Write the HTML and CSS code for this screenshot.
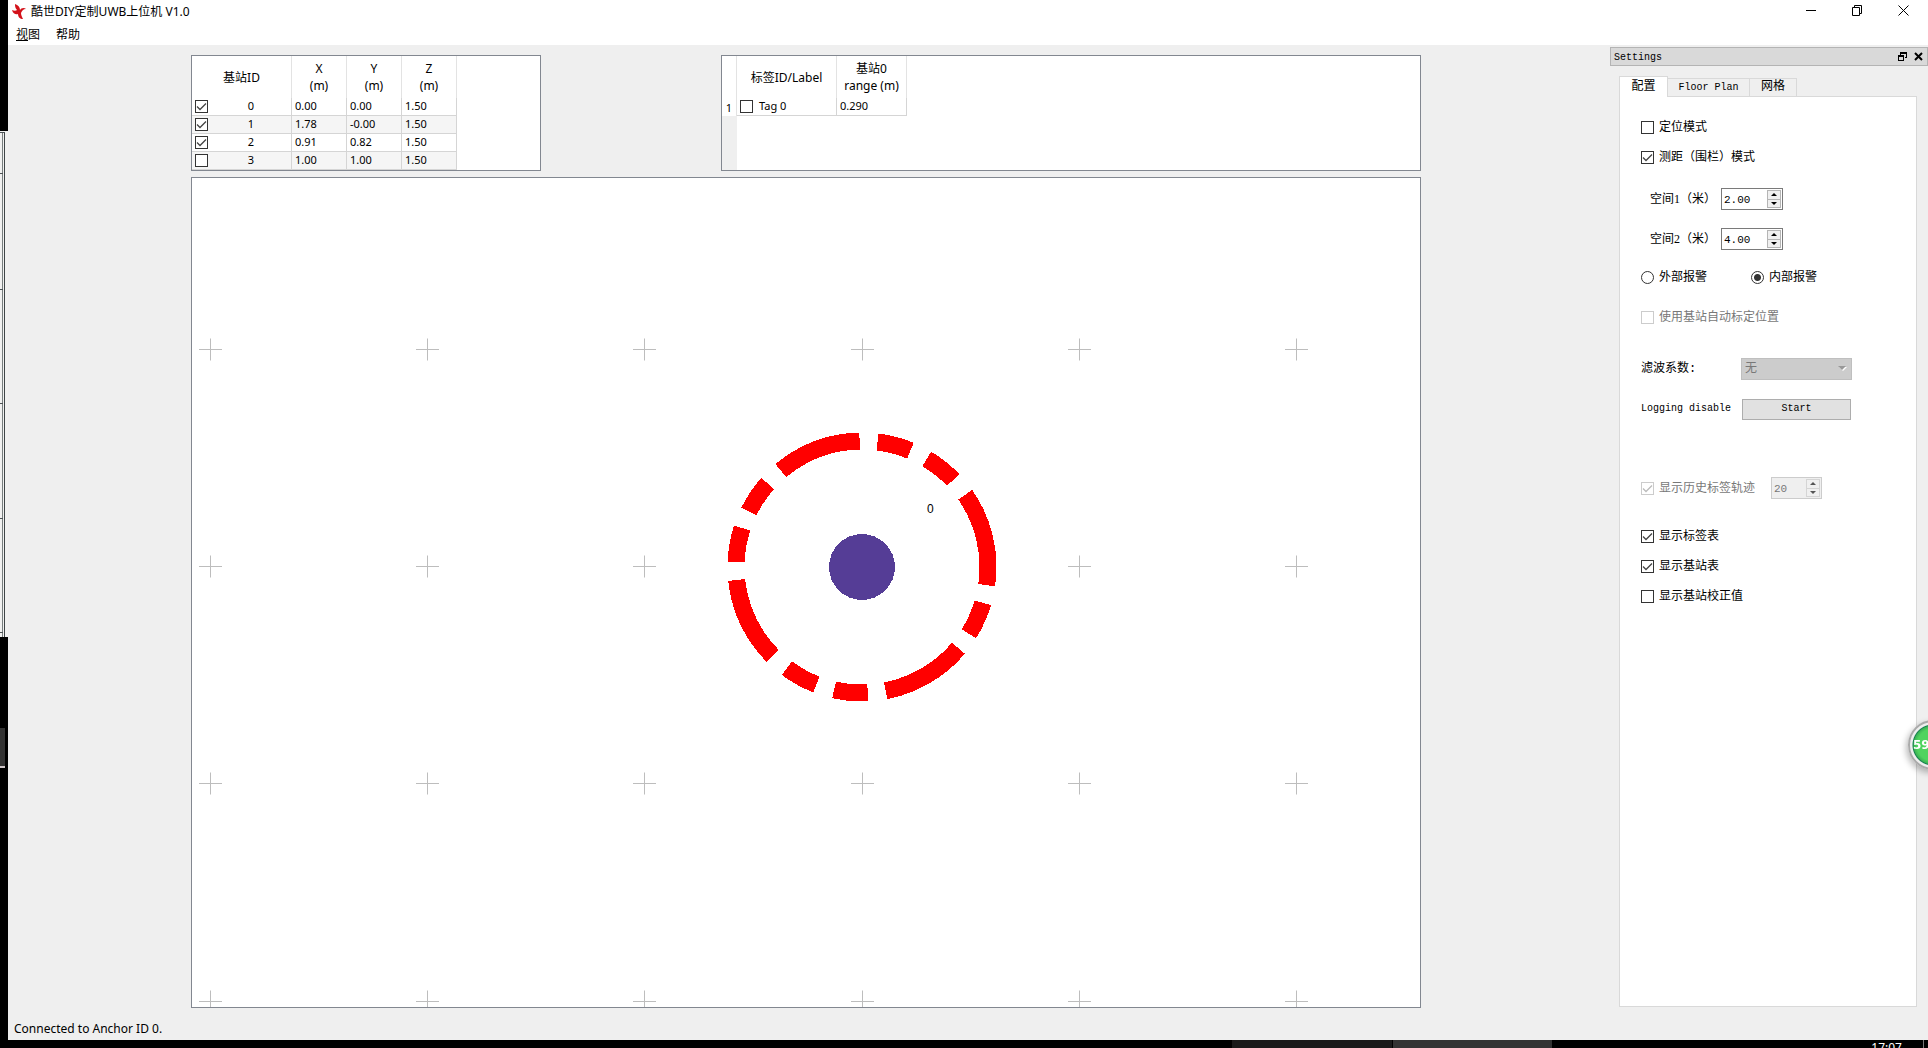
FILE: index.html
```html
<!DOCTYPE html>
<html lang="zh-CN">
<head>
<meta charset="utf-8">
<title>酷世DIY定制UWB上位机 V1.0</title>
<link rel="stylesheet" href="styles.css">
</head>
<body>
<div class="desktop">
  <aside class="behind" aria-hidden="true">
    <svg width="8" height="1040" viewBox="0 0 8 1040">
      <rect width="8" height="1040" fill="#000"/>
      <rect y="131" width="8" height="506" fill="#f1f1f0"/>
      <path d="M2.500 133V637" stroke="#777d7d"/>
      <path d="M4.500 132V637" stroke="#3f4547"/>
      <path d="M0 132.500H5M0 173.500H3M0 289.500H3M0 403.500H3M0 518.500H3M0 632.500H3" stroke="#4b5254"/>
      <rect y="728" width="5" height="38" fill="#333"/>
      <rect y="766" width="5" height="2" fill="#cfc6c8"/>
    </svg>
  </aside>
  <div class="window">
    <header class="titlebar">
      <svg class="logo" width="14" height="16" viewBox="0 0 14 16"><path fill="#d3121a" d="M3 0C6 1 8 3 8 6C9 4 12 3 14 5C11 5 10 7 9 9C9 11 10 13 11 15C8 15 6 13 6 10C4 11 1 10 0 6C2 7 4 7 5 6C3 4 3 2 3 0Z"/></svg>
      <h1 class="title">酷世DIY定制UWB上位机 V1.0</h1>
      <button class="winbtn" aria-label="最小化"><svg width="11" height="11"><path d="M0 5.500H10" stroke="#000"/></svg></button>
      <button class="winbtn" aria-label="还原"><svg width="11" height="11"><path d="M.5 2.500H7.500V10.500H.5ZM2.500 2.500V.5H9.500V8.500H7.500" fill="none" stroke="#000"/></svg></button>
      <button class="winbtn" aria-label="关闭"><svg width="11" height="11"><path d="M.5 .5L10.500 10.500M10.500 .5L.5 10.500" stroke="#000"/></svg></button>
    </header>
    <nav class="menubar">
      <button class="menu"><u>视</u>图</button>
      <button class="menu">帮助</button>
    </nav>
    <div class="body">
      <main class="main">
        <div class="tables">
          <section class="box anchors">
            <table class="grid">
              <colgroup><col class="c100"><col class="c55"><col class="c55"><col class="c55"></colgroup>
              <thead><tr><th>基站ID</th><th>X<br>(m)</th><th>Y<br>(m)</th><th>Z<br>(m)</th></tr></thead>
              <tbody>
                <tr><td><label class="cell"><input type="checkbox" checked><span class="id">0</span></label></td><td>0.00</td><td>0.00</td><td>1.50</td></tr>
                <tr><td><label class="cell"><input type="checkbox" checked><span class="id">1</span></label></td><td>1.78</td><td>-0.00</td><td>1.50</td></tr>
                <tr><td><label class="cell"><input type="checkbox" checked><span class="id">2</span></label></td><td>0.91</td><td>0.82</td><td>1.50</td></tr>
                <tr><td><label class="cell"><input type="checkbox"><span class="id">3</span></label></td><td>1.00</td><td>1.00</td><td>1.50</td></tr>
              </tbody>
            </table>
          </section>
          <section class="box tags">
            <table class="grid">
              <colgroup><col class="c15"><col class="c100"><col class="c70"></colgroup>
              <thead><tr><th></th><th>标签ID/Label</th><th>基站0<br>range (m)</th></tr></thead>
              <tbody><tr><th class="rownum" scope="row">1</th><td><label class="cell"><input type="checkbox">Tag 0</label></td><td>0.290</td></tr></tbody>
            </table>
          </section>
        </div>
        <section class="box canvas">
          <svg class="plot" viewBox="0 0 1228 830" preserveAspectRatio="xMidYMin slice">
            <defs><path id="cross" d="M-11.500 0H11.500M0 -11V11" stroke="#bdbdbd"/>
              <g id="row"><use href="#cross" x="18.500"/><use href="#cross" x="235.500"/><use href="#cross" x="452.500"/><use href="#cross" x="670.500"/><use href="#cross" x="887.500"/><use href="#cross" x="1104.500"/></g></defs>
            <use href="#row" y="171.500"/><use href="#row" y="388.500"/><use href="#row" y="605.500"/><use href="#row" y="823.500"/>
            <circle cx="670" cy="389" r="126" fill="none" stroke="#f00" stroke-width="17" pathLength="360" transform="rotate(-35 670 389)" stroke-dasharray="43.3 8.2 15.5 8.1 39.1 8.2 15.4 8.4 15.4 8.4 39.1 8.2 15.7 8.1 15.4 8.4 39 8.2 15.5 8.3 15.4 8.7" shape-rendering="crispEdges"/>
            <circle cx="670" cy="389" r="33" fill="#553d96" shape-rendering="crispEdges"/>
            <text class="tagname" x="735" y="335">0</text>
          </svg>
        </section>
      </main>
      <aside class="dock">
        <header class="dockbar">
          <h2 class="docktitle">Settings</h2>
          <button class="dockbtn" aria-label="浮动"><svg width="9" height="9"><path d="M0 3H6V9H0ZM1 5V8H5V5ZM2 0H9V6H7V5H8V2H3V3H2Z" fill="#000" fill-rule="evenodd"/></svg></button>
          <button class="dockbtn" aria-label="关闭"><svg width="9" height="9"><path d="M1 1L8 8M8 1L1 8" stroke="#000" stroke-width="2"/></svg></button>
        </header>
        <div class="tabs" role="tablist">
          <button class="tab active" role="tab" aria-selected="true">配置</button>
          <button class="tab latin" role="tab">Floor Plan</button>
          <button class="tab last" role="tab">网格</button>
        </div>
        <form class="panel">
          <div class="group">
            <label class="row"><input type="checkbox">定位模式</label>
            <label class="row"><input type="checkbox" checked>测距（围栏）模式</label>
          </div>
          <div class="group spins">
            <div class="row indent"><label class="spinlabel" for="s1">空间1（米）</label><span class="spin"><input id="s1" type="number" step="0.01" value="2.00"><span class="steps"><button type="button" class="up" aria-label="增加"></button><button type="button" class="down" aria-label="减少"></button></span></span></div>
            <div class="row indent"><label class="spinlabel" for="s2">空间2（米）</label><span class="spin"><input id="s2" type="number" step="0.01" value="4.00"><span class="steps"><button type="button" class="up" aria-label="增加"></button><button type="button" class="down" aria-label="减少"></button></span></span></div>
          </div>
          <div class="group spins near">
            <div class="row"><label class="row radio"><input type="radio" name="alarm">外部报警</label><label class="row radio"><input type="radio" name="alarm" checked>内部报警</label></div>
            <label class="row off"><input type="checkbox" disabled>使用基站自动标定位置</label>
          </div>
          <div class="group spins far">
            <div class="row"><label class="name" for="filter">滤波系数:</label><select id="filter" disabled><option>无</option></select></div>
            <div class="row"><span class="name latin">Logging disable</span><button type="button" class="start">Start</button></div>
          </div>
          <div class="group history">
            <div class="row"><label class="row off trail"><input type="checkbox" checked disabled>显示历史标签轨迹</label><span class="spin small off"><input type="number" value="20" aria-label="轨迹长度" disabled><span class="steps"><button type="button" class="up" aria-label="增加" disabled></button><button type="button" class="down" aria-label="减少" disabled></button></span></span></div>
          </div>
          <div class="group show">
            <label class="row"><input type="checkbox" checked>显示标签表</label>
            <label class="row"><input type="checkbox" checked>显示基站表</label>
            <label class="row"><input type="checkbox">显示基站校正值</label>
          </div>
        </form>
      </aside>
    </div>
    <footer class="status">Connected to Anchor ID 0.</footer>
  </div>
  <footer class="taskbar"><span class="task dim"></span><span class="task"></span><time class="clock">17:07</time><span class="peek"></span></footer>
</div>
<div class="bubble">59</div>
</body>
</html>
```
FILE: styles.css
```css
* { box-sizing: border-box; }
body {
  margin: 0;
  overflow: hidden;
  background: #000;
  color: #000;
  font: 12px/18px "Noto Sans", "Noto Sans CJK SC", sans-serif;
}
button, input, select { font: inherit; color: inherit; margin: 0; }
button { padding: 0; border: 0; background: none; }
h1, h2 { margin: 0; font-size: 12px; font-weight: 400; }

.desktop {
  display: grid;
  grid-template: minmax(0, 1fr) 8px / 8px minmax(0, 1fr);
  height: 100vh;
}
.behind { overflow: hidden; }
.window { display: flex; flex-direction: column; min-height: 0; background: #efefef; }

.titlebar { display: flex; align-items: center; height: 23px; padding: 0 2px 0 4px; background: #fff; }
.title { flex: 1; padding-left: 5px; }
.winbtn { display: grid; place-items: center; width: 46px; height: 22px; padding-bottom: 2px; }
.menubar { display: flex; gap: 16px; height: 22px; padding-left: 8px; background: #fff; }
.menu { height: 22px; padding-top: 2px; }

.body { display: flex; flex: 1; min-height: 0; }
.main { display: flex; flex: 1; flex-direction: column; gap: 6px; min-width: 0; padding: 10px 189px 0 183px; }
.tables { display: flex; justify-content: space-between; height: 116px; }
.box { border: 1px solid #828790; background: #fff; overflow: hidden; }
.anchors { width: 350px; }
.tags { width: 700px; background: linear-gradient(to right, #efefef 15px, #fff 15px); }
.canvas { flex: 1; min-height: 0; }
.plot { display: block; width: 100%; height: 100%; }
.tagname { font: 12px "Liberation Sans", sans-serif; }

.grid { table-layout: fixed; border-collapse: separate; border-spacing: 0; width: 0; }
.c15 { width: 15px; }
.c55 { width: 55px; }
.c70 { width: 70px; }
.c100 { width: 100px; }
.grid th { height: 42px; padding: 0; border-right: 1px solid #e3e3e3; background: #fff; font-weight: 400; line-height: 17px; white-space: nowrap; }
.grid td { height: 18px; padding: 0 3px; border: solid #d5d5d5; border-width: 0 1px 1px 0; background: #fff; font-size: 11px; line-height: 16px; vertical-align: top; }
.grid tr:nth-child(even) td { background: #f5f5f5; }
.grid .rownum { height: 18px; font-size: 11px; line-height: 17px; }
.cell { display: flex; gap: 6px; height: 17px; }
.cell input { margin-top: 2px; }
.id { flex: 1; text-align: center; }

input[type="checkbox"], input[type="radio"] {
  flex: none;
  appearance: none;
  width: 13px;
  height: 13px;
  border: 1px solid #333;
  background: #fff;
}
input[type="checkbox"]:checked { background: #fff url("data:image/svg+xml,%3Csvg xmlns='http://www.w3.org/2000/svg' width='11' height='11'%3E%3Cpath d='M1 5.500L4 8.500L10 2.500' fill='none' stroke='%23444' stroke-width='1.300'/%3E%3C/svg%3E") center no-repeat; }
input[type="radio"] { border-radius: 50%; }
input[type="radio"]:checked { background: radial-gradient(circle, #333 3px, #fff 4px); }
input[type="checkbox"]:disabled { border-color: #ccc; }
input[type="checkbox"]:disabled:checked { background-image: url("data:image/svg+xml,%3Csvg xmlns='http://www.w3.org/2000/svg' width='11' height='11'%3E%3Cpath d='M1 5.500L4 8.500L10 2.500' fill='none' stroke='%23bbb' stroke-width='1.300'/%3E%3C/svg%3E"); }

.dock { display: flex; flex-direction: column; width: 318px; padding-top: 2px; font-family: "Liberation Mono", "Noto Sans CJK SC", monospace; }
.dockbar { display: flex; align-items: center; gap: 7px; height: 19px; padding: 0 4px 0 3px; border: 1px solid #b4b4b4; background: #d9d9d9; }
.docktitle { flex: 1; padding-top: 2px; font-size: 10px; }
.dockbtn { display: grid; place-items: center; width: 9px; height: 9px; }
.tabs { display: flex; align-items: flex-end; height: 30px; padding: 0 9px; }
.tab { height: 18px; border: solid #d9d9d9; border-width: 1px 1px 0 0; width: 47px; line-height: 17px; }
.tab.active { z-index: 1; width: 49px; height: 21px; margin-bottom: -1px; border-left-width: 1px; background: #fff; }
.tab.latin { width: 82px; }
.latin, .start { font-size: 10px; }
.panel { flex: 1; margin: 0 11px 1px 9px; padding: 19px 21px; border: 1px solid #d9d9d9; background: #fff; }

.group { display: flex; flex-direction: column; gap: 8px; }
.spins { gap: 18px; margin-top: 20px; }
.near { margin-top: 16px; }
.far { margin-top: 30px; }
.history { margin-top: 57px; }
.show { margin-top: 26px; }
.row { display: flex; align-items: center; gap: 5px; height: 22px; white-space: nowrap; }
label.row { padding-top: 2px; }
label.row input { margin-bottom: 2px; }
.indent { padding-left: 9px; }
.spinlabel { width: 66px; font-family: "Liberation Serif", "Noto Sans CJK SC", serif; }
.radio { width: 105px; }
.off { color: #787878; }
.name { width: 95px; }
.trail { width: 125px; }

.spin { display: flex; width: 62px; height: 22px; padding: 1px; border: 1px solid #7a7a7a; background: #fff; }
.spin.small { width: 51px; border-color: #ccc; background: #efefef; }
.spin input { flex: 1; appearance: textfield; width: 0; min-width: 0; padding: 1px 1px 0; border: 0; background: none; font-size: 11px; }
.spin input::-webkit-inner-spin-button { appearance: none; }
.steps { display: flex; flex-direction: column; width: 14px; }
.up, .down { display: grid; place-items: center; flex: 1; border: 1px solid #b5b5b5; background: #f0f0f0; }
.down { border-top: 0; }
.up::before, .down::before { content: ""; border: solid transparent; border-width: 0 3px 3px; border-bottom-color: #000; }
.down::before { transform: rotate(180deg); }
.off .up, .off .down { border-color: #d5d5d5; }
.off .up::before, .off .down::before { border-bottom-color: #555; }

select {
  appearance: none;
  width: 111px;
  height: 22px;
  padding: 0 3px;
  border: 1px solid #bfbfbf;
  border-radius: 0;
  background: #ccc url("data:image/svg+xml,%3Csvg xmlns='http://www.w3.org/2000/svg' width='9' height='6'%3E%3Cpath d='M1 1H9L5 5Z' fill='%23fff'/%3E%3Cpath d='M0 0H8L4 4Z' fill='%23999'/%3E%3C/svg%3E") right 4px center no-repeat;
}
select:disabled { color: #787878; opacity: 1; }
.start { width: 109px; height: 21px; border: 1px solid #adadad; background: #e1e1e1; margin-left: 1px; }

.status { height: 32px; padding: 12px 6px 0; line-height: 18px; }
.taskbar { display: flex; grid-column: 1 / -1; justify-content: flex-end; gap: 1px; overflow: hidden; color: #fff; }
.task { width: 159px; background: #333; }
.dim { width: 160px; background: #1a1a1a; }
.clock { width: 369px; padding-right: 20px; text-align: right; line-height: 16px; }
.peek { width: 5px; border-left: 1px solid #777; }

.bubble {
  position: fixed;
  top: 720px;
  right: -30px;
  width: 50px;
  height: 50px;
  padding-left: 3px;
  border: 2px solid #aaa;
  border-radius: 50%;
  background: radial-gradient(circle at 50% 50%, #4fd35f 0 16px, #3cb554 19px, #168050 20px, #eee 21px);
  box-shadow: -2px 3px 6px #0004;
  color: #fff;
  font: 700 12px/46px "DejaVu Sans", sans-serif;
}
```
